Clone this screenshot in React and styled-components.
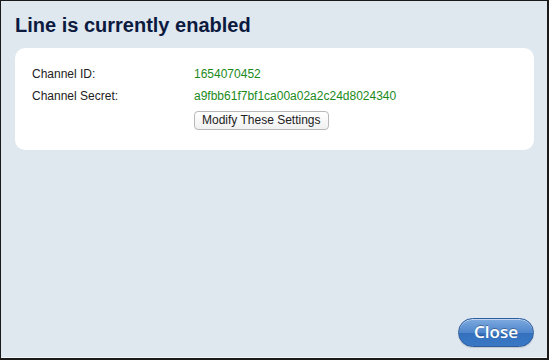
import React from "react";
import styled, { createGlobalStyle } from "styled-components";

const GlobalStyle = createGlobalStyle`
  html, body {
    margin: 0;
    padding: 0;
  }
  body {
    font-family: "Liberation Sans", Arial, sans-serif;
  }
`;

const Window = styled.div`
  box-sizing: border-box;
  width: 549px;
  height: 360px;
  background-color: #dfe7ef;
  border-top: 1px solid #1a1a1a;
  border-left: 1px solid #1a1a1a;
  border-right: 2px solid #1a1a1a;
  border-bottom: 2px solid #1a1a1a;
  box-shadow: inset 0 -1px 0 #f4f7fa;
  display: flex;
  flex-direction: column;
  padding: 12px 13px 11px 14px;
`;

const Title = styled.h1`
  margin: 0;
  font-size: 20px;
  font-weight: bold;
  color: #0c1a40;
  line-height: 24px;
`;

const Card = styled.div`
  margin-top: 11px;
  background: #fff;
  border-radius: 10px;
  padding: 19px 17px 20px;
  display: grid;
  grid-template-columns: 162px 1fr;
  row-gap: 8px;
  font-size: 12px;
  line-height: 14px;
`;

const Label = styled.div`
  color: #222;
`;

const Value = styled.div`
  color: #1b8a1b;
`;

const SettingsButton = styled.button`
  grid-column: 2;
  justify-self: start;
  font-family: inherit;
  font-size: 12px;
  color: #222;
  background: linear-gradient(#ffffff, #f1f1f1);
  border: 1px solid #b8b8b8;
  border-radius: 4px;
  padding: 1px 7px 2px;
  height: 19px;
`;

const Footer = styled.div`
  margin-top: auto;
  display: flex;
  justify-content: flex-end;
`;

const CloseButton = styled.button`
  font-family: "Open Sans", "Liberation Sans", sans-serif;
  font-size: 17px;
  font-weight: 600;
  color: #fff;
  width: 76px;
  height: 29px;
  border-radius: 15px;
  border: 1px solid #2c5d9e;
  background: linear-gradient(#7eaadf 0%, #4f86cc 50%, #3470bd 51%, #3a78c4 100%);
  box-shadow: inset 0 1px 0 rgba(255, 255, 255, 0.5), 0 1px 1px rgba(0, 0, 0, 0.15);
  text-shadow: 0 -1px 0 rgba(0, 0, 0, 0.3);
  padding: 0 0 2px;
`;

export default function App() {
  return (
    <>
      <GlobalStyle />
      <Window>
        <Title>Line is currently enabled</Title>
        <Card>
          <Label>Channel ID:</Label>
          <Value>1654070452</Value>
          <Label>Channel Secret:</Label>
          <Value>a9fbb61f7bf1ca00a02a2c24d8024340</Value>
          <SettingsButton>Modify These Settings</SettingsButton>
        </Card>
        <Footer>
          <CloseButton>Close</CloseButton>
        </Footer>
      </Window>
    </>
  );
}
